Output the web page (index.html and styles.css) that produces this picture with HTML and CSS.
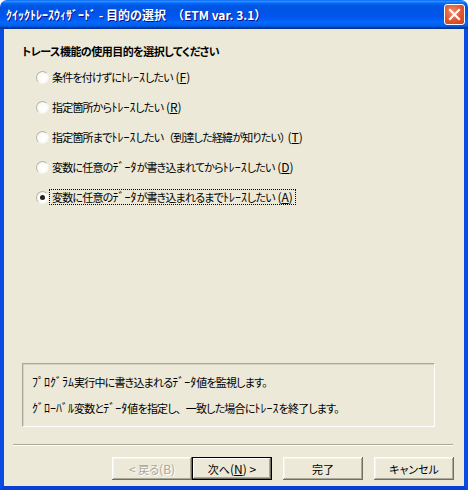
FILE: index.html
```html
<!DOCTYPE html>
<html lang="ja">
<head>
<meta charset="utf-8">
<title>クイックトレースウィザード</title>
<link rel="stylesheet" href="styles.css">
</head>
<body>
<div class="window">
  <div class="titlebar">
    <span class="title">ｸｲｯｸﾄﾚｰｽｳｨｻﾞｰﾄﾞ - 目的の選択　（ETM var. 3.1）</span>
    <span class="close">
      <svg width="13" height="13" viewBox="0 0 13 13"><path d="M2 2 L11 11 M11 2 L2 11" stroke="#fff" stroke-width="2.2" stroke-linecap="square"/></svg>
    </span>
  </div>
  <div class="body">
    <div class="heading">トレース機能の使用目的を選択してください</div>
    <div class="options">
      <div class="option"><span class="radio"></span><span class="label">条件を付けずに<span class="hw">ﾄﾚｰｽ</span>したい<span class="hw"> (<u>F</u>)</span></span></div>
      <div class="option"><span class="radio"></span><span class="label">指定箇所から<span class="hw">ﾄﾚｰｽ</span>したい<span class="hw"> (<u>R</u>)</span></span></div>
      <div class="option"><span class="radio"></span><span class="label">指定箇所まで<span class="hw">ﾄﾚｰｽ</span>したい<span class="fw">（</span>到達した経緯が知りたい）<span class="hw"> (<u>T</u>)</span></span></div>
      <div class="option"><span class="radio"></span><span class="label">変数に任意の<span class="hw">ﾃﾞｰﾀ</span>が書き込まれてから<span class="hw">ﾄﾚｰｽ</span>したい<span class="hw"> (<u>D</u>)</span></span></div>
      <div class="option"><span class="radio checked"></span><span class="label focus">変数に任意の<span class="hw">ﾃﾞｰﾀ</span>が書き込まれるまで<span class="hw">ﾄﾚｰｽ</span>したい<span class="hw"> (<u>A</u>)</span></span></div>
    </div>
    <div class="desc">
      <p><span class="hw">ﾌﾟﾛｸﾞﾗﾑ</span>実行中に書き込まれる<span class="hw">ﾃﾞｰﾀ</span>値を監視します。</p>
      <p><span class="hw">ｸﾞﾛｰﾊﾞﾙ</span>変数と<span class="hw">ﾃﾞｰﾀ</span>値を指定し<span class="fw">、</span>一致した場合に<span class="hw">ﾄﾚｰｽ</span>を終了します。</p>
    </div>
    <div class="sep"></div>
    <div class="buttons">
      <div class="pair">
        <span class="btn disabled"><span class="hw">&lt; </span>戻る<span class="hw">(B)</span></span>
        <span class="btn default">次へ<span class="hw">(<u>N</u>) &gt;</span></span>
      </div>
      <span class="btn">完了</span>
      <span class="btn">キャンセル</span>
    </div>
  </div>
</div>
</body>
</html>
```

FILE: styles.css
```css
* { box-sizing: border-box; }
html, body { margin: 0; padding: 0; background: #fff; }
body {
  font-family: "Noto Sans CJK JP", "Noto Sans", sans-serif;
  font-size: 11px;
  color: #000;
}
.window {
  width: 468px;
  height: 490px;
  display: flex;
  flex-direction: column;
  border-radius: 7px 7px 0 0;
  overflow: hidden;
}
.titlebar {
  height: 29px;
  flex: none;
  display: flex;
  align-items: center;
  justify-content: space-between;
  padding: 0 3px 0 6px;
  background: linear-gradient(to bottom, #0058EE 0%, #3593FF 4%, #288EFF 6%, #127DFF 8%, #036FFC 10%, #0262EE 14%, #0057E5 20%, #0054E3 24%, #0055EB 56%, #005BF5 66%, #026AFE 76%, #0062EF 86%, #0052D6 92%, #0040AB 94%, #003092 100%);
}
.title {
  color: #fff;
  font-weight: bold;
  font-size: 12px;
  line-height: 14px;
  text-shadow: 1px 1px #0F1089;
  padding-top: 1px;
}
.close {
  width: 21px;
  height: 21px;
  border: 1px solid #fff;
  border-radius: 3px;
  background: radial-gradient(circle at 40% 35%, #F08A6A 0%, #E0552F 55%, #C8401E 100%);
  display: flex;
  align-items: center;
  justify-content: center;
}
.close svg { display: block; }
.body {
  flex: 1;
  display: flex;
  flex-direction: column;
  background: #ECE9D8;
  border-left: 4px solid #0A4BE4;
  border-right: 4px solid #0A4BE4;
  border-bottom: 4px solid #0A3FD6;
  padding: 14px 10px 6px 18px;
}
.heading {
  font-weight: bold;
  line-height: 16px;
  font-feature-settings: "palt";
  letter-spacing: -0.5px;
}
.hw {
  font-feature-settings: normal;
  letter-spacing: 0;
  font-size: 12px;
}
.fw {
  font-feature-settings: normal;
  letter-spacing: -1px;
}
.options {
  margin-top: 8px;
  margin-left: 14px;
  display: flex;
  flex-direction: column;
  gap: 10px;
}
.option {
  height: 20px;
  display: flex;
  align-items: center;
}
.radio {
  width: 13px;
  height: 13px;
  border-radius: 50%;
  background: radial-gradient(circle at 60% 60%, #fff 0%, #fbfaf6 60%, #eceae0 100%);
  border: 1px solid;
  border-color: #b9b6a6 #f4f3ee #f4f3ee #b9b6a6;
  position: relative;
  flex: none;
}
.radio.checked::after {
  content: "";
  position: absolute;
  left: 3px;
  top: 3px;
  width: 5px;
  height: 5px;
  border-radius: 50%;
  background: #222;
}
.label {
  margin-left: 1px;
  padding: 0 2px;
  line-height: 14px;
  font-feature-settings: "palt";
  letter-spacing: -0.8px;
}
.label.focus {
  outline: 1px dotted #000;
  outline-offset: 0;
}
u { text-decoration-thickness: 1px; text-underline-offset: 1px; }
.desc {
  margin-top: auto;
  width: 413px;
  height: 64px;
  border: 1px solid;
  border-color: #ACA899 #fff #fff #ACA899;
  box-shadow: inset 1px 1px #D6D2C2;
  padding: 10px 9px;
  font-feature-settings: "palt";
  letter-spacing: -0.8px;
}
.desc p {
  margin: 0 0 10px 0;
  line-height: 16px;
}
.sep {
  margin: 17px 0 0 -9px;
  width: 440px;
  height: 2px;
  border-top: 1px solid #ACA899;
  border-bottom: 1px solid #fff;
}
.buttons {
  margin-top: 11px;
  display: flex;
  justify-content: flex-end;
  gap: 11px;
}
.pair { display: flex; }
.btn {
  width: 80px;
  height: 23px;
  display: flex;
  align-items: center;
  justify-content: center;
  background: #ECE9D8;
  box-shadow: inset -1px -1px #716F64, inset 1px 1px #fff, inset -2px -2px #ACA899, inset 2px 2px #F5F4EC;
  font-feature-settings: "palt";
  line-height: 14px;
  white-space: pre;
}
.btn.default {
  box-shadow: inset 0 0 0 1px #000, inset -2px -2px #716F64, inset 2px 2px #fff, inset -3px -3px #ACA899;
}
.btn.disabled {
  color: #ACA899;
  text-shadow: 1px 1px #fff;
}
```
